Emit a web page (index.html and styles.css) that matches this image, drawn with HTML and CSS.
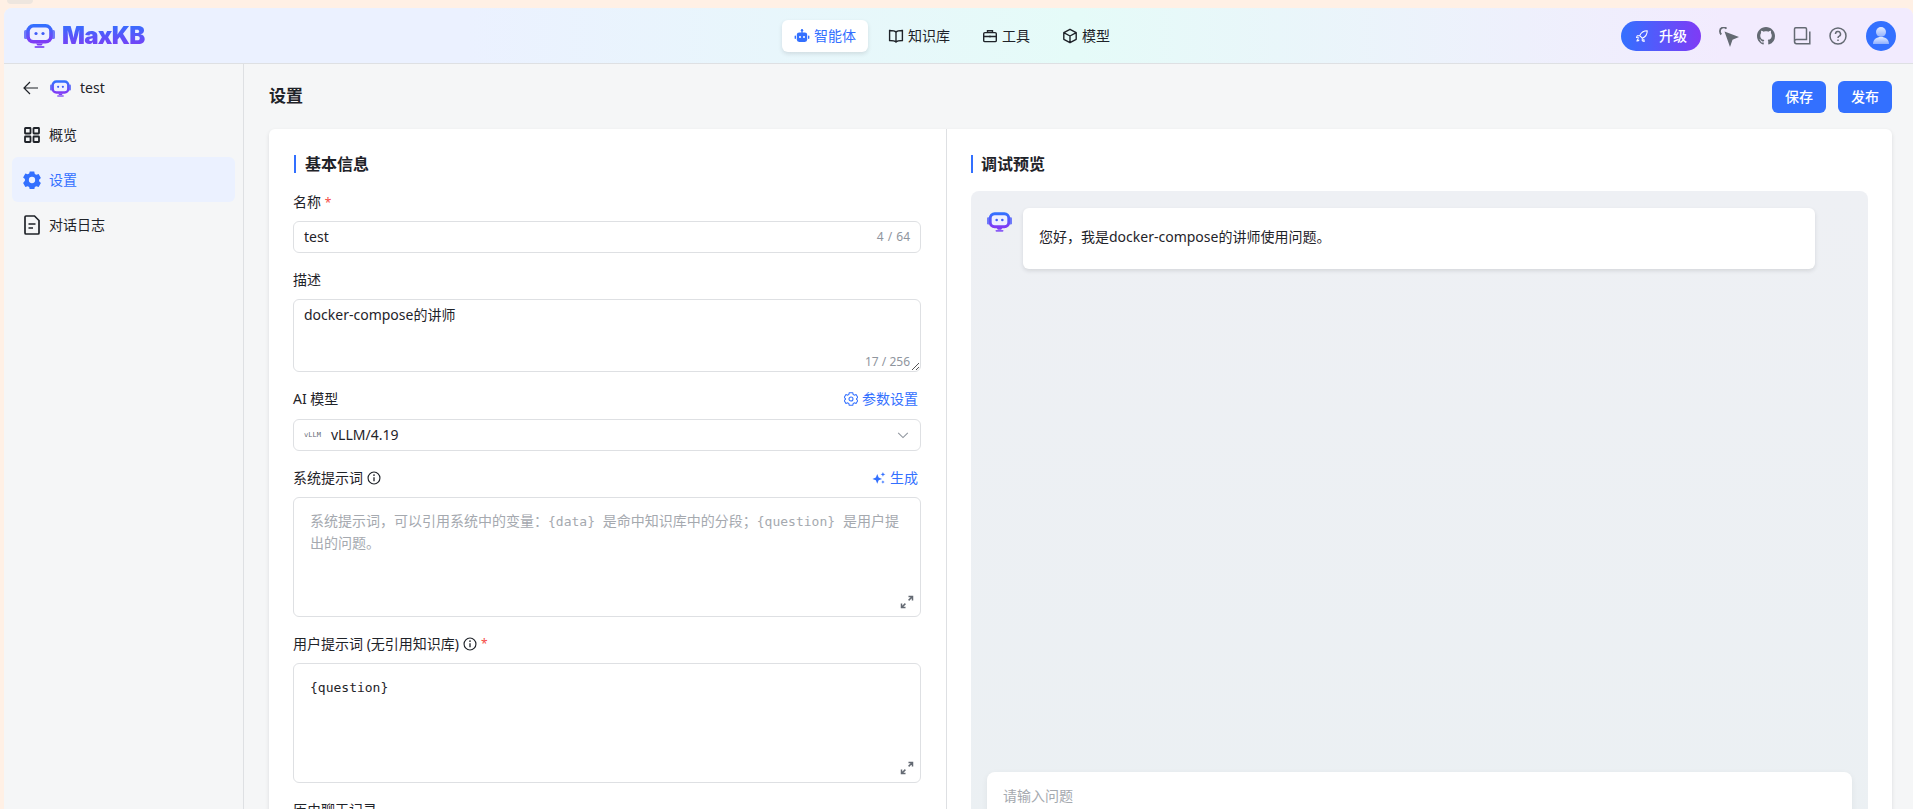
FILE: index.html
```html
<!DOCTYPE html>
<html lang="zh-CN">
<head>
    <meta charset="UTF-8">
    <meta name="viewport" content="width=device-width, initial-scale=1.0">
    <title>MaxKB</title>
    <link rel="stylesheet" href="styles.css">
</head>
<body>
    <svg class="defs" width="0" height="0">
        <defs>
            <linearGradient id="logo-grad" x1="0" y1="0" x2="0" y2="1">
                <stop offset="0" stop-color="#3370ff"/>
                <stop offset="1" stop-color="#7f3bf5"/>
            </linearGradient>
            <linearGradient id="avatar-grad" x1="0" y1="0" x2="0" y2="1">
                <stop offset="0" stop-color="#e3ebff"/>
                <stop offset="1" stop-color="#8fb0ff"/>
            </linearGradient>
            <symbol id="robot" viewBox="0 0 31 24">
                <rect x="0" y="6" width="3.500" height="9" rx="1.500" fill="#6f7cf9"/>
                <rect x="27.500" y="6" width="3.500" height="9" rx="1.500" fill="#6f7cf9"/>
                <rect x="4" y="1.800" width="23" height="16" rx="5.500" fill="#eef0ff" stroke="url(#logo-grad)" stroke-width="3.600"/>
                <circle cx="12" cy="9.500" r="1.600" fill="#3f5cf8"/>
                <circle cx="19" cy="9.500" r="1.600" fill="#3f5cf8"/>
                <path d="M12 19.500h7l-1.500 2h-4z" fill="#7f3bf5"/>
                <rect x="10.500" y="22" width="10" height="2" rx="1" fill="#8a5cf6"/>
            </symbol>
            <symbol id="expand" viewBox="0 0 16 16">
                <path d="M9.500 2.500h4v4M13.200 2.800 9.600 6.400M6.500 13.500h-4v-4M2.800 13.200l3.600-3.600" fill="none" stroke="#646a73" stroke-width="1.500"/>
            </symbol>
            <symbol id="info" viewBox="0 0 16 16">
                <circle cx="8" cy="8" r="6.800" fill="none" stroke="#1f2329" stroke-width="1.300"/>
                <path d="M8 7v4.600" stroke="#1f2329" stroke-width="1.500"/>
                <circle cx="8" cy="4.700" r="1" fill="#1f2329"/>
            </symbol>
        </defs>
    </svg>
    <div class="browser-tab"></div>

    <div class="app">
        <header class="topbar">
            <a href="#" class="brand">
                <svg class="brand-icon"><use href="#robot"/></svg>
                <span class="brand-name">MaxKB</span>
            </a>
            <nav class="topnav">
                <a href="#" class="topnav-item active">
                    <svg class="nav-icon" viewBox="0 0 16 16"><circle cx="8" cy="2.200" r="1.200" fill="#3370ff"/><path d="M7.400 3h1.200v2H7.400z" fill="#3370ff"/><rect x="2.800" y="4.400" width="10.400" height="9.600" rx="2.400" fill="#3370ff"/><rect x=".6" y="7.400" width="1.400" height="3.600" rx=".7" fill="#3370ff"/><rect x="14" y="7.400" width="1.400" height="3.600" rx=".7" fill="#3370ff"/><circle cx="6" cy="9" r="1" fill="#fff"/><circle cx="10" cy="9" r="1" fill="#fff"/></svg>
                    智能体
                </a>
                <a href="#" class="topnav-item">
                    <svg class="nav-icon" viewBox="0 0 16 16" fill="none" stroke="#1f2329" stroke-width="1.400"><path d="M8 4.200C7 3 5.400 2.500 1.600 2.500v10c3.800 0 5.400.4 6.400 1.500 1-1.100 2.600-1.500 6.400-1.500v-10C10.600 2.500 9 3 8 4.200zM8 4.200V14"/></svg>
                    知识库
                </a>
                <a href="#" class="topnav-item">
                    <svg class="nav-icon" viewBox="0 0 16 16" fill="none" stroke="#1f2329" stroke-width="1.400"><rect x="1.700" y="4.600" width="12.600" height="9" rx="1.200"/><path d="M5.500 4.600V2.700h5v1.900M1.700 8.500h12.600M8 7.600v1.800"/></svg>
                    工具
                </a>
                <a href="#" class="topnav-item">
                    <svg class="nav-icon" viewBox="0 0 16 16" fill="none" stroke="#1f2329" stroke-width="1.400" stroke-linejoin="round"><path d="M8 1.300 14.200 4.700v6.600L8 14.700l-6.200-3.400V4.700zM1.800 4.700 8 8l6.200-3.300M8 8v6.700"/></svg>
                    模型
                </a>
            </nav>
            <div class="top-actions">
                <button class="upgrade">
                    <svg class="upgrade-icon" viewBox="0 0 16 16" fill="none" stroke="#fff" stroke-width="1.200" stroke-linejoin="round"><path d="M14 2c-4 0-7 1.800-8.600 5.600l2.900 2.900C12.200 9 14 6 14 2zM5.400 7.600H2.600L1.700 9.800l3 .6M8.300 10.500v2.800l2.300.9-.7-3M3.700 11.300c-1 .4-1.400 1.500-1.500 2.500 1-.1 2.100-.5 2.500-1.500"/></svg>
                    升级
                </button>
                <div class="icon-row">
                    <svg class="tool-icon tool-cursor" viewBox="0 0 20 20"><path d="M5.500 4.500 20 10l-6.500 2.800L11 20z" fill="#646a73"/><path d="M7.500 1.700A3.700 3.700 0 0 0 1 4.500c0 1.200.5 2.200 1.300 3" fill="none" stroke="#646a73" stroke-width="1.800"/></svg>
                    <svg class="tool-icon" viewBox="0 0 16 16"><path fill="#646a73" d="M8 0C3.580 0 0 3.580 0 8c0 3.540 2.290 6.530 5.470 7.590.4.070.55-.17.55-.38 0-.19-.01-.82-.01-1.490-2.010.37-2.530-.49-2.690-.94-.09-.23-.48-.94-.82-1.130-.28-.15-.68-.52-.01-.53.63-.01 1.080.58 1.230.82.720 1.210 1.870.87 2.330.66.070-.52.280-.87.510-1.070-1.780-.2-3.640-.89-3.640-3.950 0-.87.310-1.590.820-2.150-.08-.2-.36-1.020.08-2.120 0 0 .67-.21 2.200.82.640-.18 1.320-.27 2-.27.680 0 1.360.09 2 .27 1.530-1.040 2.200-.82 2.200-.82.440 1.100.160 1.920.080 2.120.510.560.820 1.270.820 2.150 0 3.070-1.870 3.750-3.650 3.950.290.250.540.730.540 1.480 0 1.070-.01 1.930-.01 2.200 0 .21.150.46.550.38A8.013 8.013 0 0 0 16 8c0-4.420-3.580-8-8-8z"/></svg>
                    <svg class="tool-icon" viewBox="0 0 18 18" fill="none" stroke="#646a73" stroke-width="1.500"><path d="M1.500 14.500V2c0-.7.500-1.200 1.200-1.200h9.600c.7 0 1.200.5 1.200 1.200v10.500H3.500c-1.100 0-2 .9-2 2s.9 2.200 2 2.200h13.300V4.500"/></svg>
                    <svg class="tool-icon" viewBox="0 0 18 18" fill="none" stroke="#646a73" stroke-width="1.500"><circle cx="9" cy="9" r="8"/><path d="M6.500 7a2.500 2.500 0 1 1 3.700 2.200c-.8.4-1.200.9-1.200 1.800"/><path d="M9 12.500v1.400"/></svg>
                </div>
                <div class="avatar">
                    <svg viewBox="0 0 30 30" width="30" height="30"><circle cx="15" cy="11" r="5" fill="url(#avatar-grad)"/><path d="M7 23c0-4.500 3.500-7 8-7s8 2.500 8 7z" fill="url(#avatar-grad)"/></svg>
                </div>
            </div>
        </header>

        <div class="layout">
            <aside class="sidebar">
                <div class="side-head">
                    <svg class="back" viewBox="0 0 16 16" fill="none" stroke="#1f2329" stroke-width="1.200"><path d="M15 8H1M7 2 1 8l6 6"/></svg>
                    <svg class="side-logo"><use href="#robot"/></svg>
                    <span>test</span>
                </div>
                <a href="#" class="side-item">
                    <svg class="side-icon" viewBox="0 0 16 16" fill="none" stroke="#1f2329" stroke-width="1.800"><rect x="1" y="1" width="5.500" height="5.500" rx=".5"/><rect x="9.500" y="1" width="5.500" height="5.500" rx=".5"/><rect x="1" y="9.500" width="5.500" height="5.500" rx=".5"/><rect x="9.500" y="9.500" width="5.500" height="5.500" rx=".5"/></svg>
                    概览
                </a>
                <a href="#" class="side-item active">
                    <svg class="side-icon side-icon-gear" viewBox="0 0 16 16"><path fill="#3370ff" fill-rule="evenodd" d="M6 .5h4l.5 2.200 1.300.7 2.100-.7 2 3.500-1.600 1.500v1.500l1.600 1.500-2 3.500-2.100-.7-1.300.7-.5 2.300H6l-.5-2.300-1.300-.7-2.100.7-2-3.500L1.700 8.700V7.200L.1 5.700l2-3.500 2.100.7 1.300-.7zM8 5.200a2.800 2.800 0 1 0 0 5.600 2.800 2.800 0 0 0 0-5.600z"/></svg>
                    设置
                </a>
                <a href="#" class="side-item">
                    <svg class="side-icon side-icon-tall" viewBox="0 0 16 20" fill="none" stroke="#1f2329" stroke-width="1.700"><path d="M1 2c0-.6.400-1 1-1h8.500L15 5.500V18c0 .6-.4 1-1 1H2c-.6 0-1-.4-1-1zM4.500 9h7M4.500 13h4.500"/></svg>
                    对话日志
                </a>
            </aside>

            <main class="main">
                <div class="page-head">
                    <h2 class="page-title">设置</h2>
                    <div class="page-btns">
                        <button class="btn-primary">保存</button>
                        <button class="btn-primary">发布</button>
                    </div>
                </div>

                <section class="card">
                    <div class="form-side">
                        <h4 class="block-title">基本信息</h4>

                        <div class="form-item">
                            <label class="form-label">名称 <span class="req">*</span></label>
                            <div class="field field-input">test<span class="count">4 / 64</span></div>
                        </div>

                        <div class="form-item">
                            <label class="form-label">描述</label>
                            <div class="field field-desc">docker-compose的讲师
                                <span class="count count-desc">17 / 256</span>
                                <svg class="resize" viewBox="0 0 8 8" fill="none" stroke="#555" stroke-width="1"><path d="M1 8 8 1M5 8l3-3"/></svg>
                            </div>
                        </div>

                        <div class="form-item">
                            <div class="label-row">
                                <label class="form-label">AI 模型</label>
                                <a href="#" class="link">
                                    <svg class="link-icon" viewBox="0 0 16 16" fill="none" stroke="#3370ff" stroke-width="1.200" stroke-linejoin="round"><path d="M6 .8h4l.5 2.100 1.300.7 2-.7 2 3.400-1.500 1.400v.6l1.500 1.400-2 3.400-2-.7-1.300.7-.5 2.100H6l-.5-2.100-1.300-.7-2 .7-2-3.400 1.500-1.400v-.6L.2 6.300l2-3.400 2 .7 1.300-.7z"/><circle cx="8" cy="8" r="2.300"/></svg>
                                    参数设置
                                </a>
                            </div>
                            <div class="field field-select">
                                <span class="model-tag">vLLM</span>
                                vLLM/4.19
                                <svg class="chevron" viewBox="0 0 16 16" fill="none" stroke="#8f959e" stroke-width="1.200"><path d="M2.500 5.500 8 11l5.500-5.500"/></svg>
                            </div>
                        </div>

                        <div class="form-item">
                            <div class="label-row">
                                <label class="form-label label-flex">系统提示词 <svg class="info"><use href="#info"/></svg></label>
                                <a href="#" class="link">
                                    <svg class="link-icon" viewBox="0 0 16 16" fill="#3370ff"><path d="M6 3.500 7.600 7.400 11.500 9 7.600 10.600 6 14.500 4.400 10.600.5 9l3.900-1.600zM12.500 1l.8 2 2 .8-2 .8-.8 2-.8-2-2-.8 2-.8zM12.500 10.500l.6 1.400 1.400.6-1.400.6-.6 1.400-.6-1.400-1.400-.6 1.400-.6z"/></svg>
                                    生成
                                </a>
                            </div>
                            <div class="field field-prompt placeholder">
                                <div class="prompt-line">系统提示词，可以引用系统中的变量：<span class="mono">{data} </span>是命中知识库中的分段；<span class="mono">{question} </span>是用户提</div>
                                <div class="prompt-line">出的问题。</div>
                                <svg class="expand"><use href="#expand"/></svg>
                            </div>
                        </div>

                        <div class="form-item">
                            <label class="form-label label-flex">用户提示词 (无引用知识库) <svg class="info"><use href="#info"/></svg> <span class="req">*</span></label>
                            <div class="field field-prompt"><span class="mono">{question}</span>
                                <svg class="expand"><use href="#expand"/></svg>
                            </div>
                        </div>

                        <div class="form-item">
                            <label class="form-label">历史聊天记录</label>
                        </div>
                    </div>

                    <div class="preview-side">
                        <h4 class="block-title">调试预览</h4>
                        <div class="chat">
                            <div class="chat-row">
                                <svg class="chat-logo"><use href="#robot"/></svg>
                                <div class="chat-msg">您好，我是docker-compose的讲师使用问题。</div>
                            </div>
                            <div class="chat-input">请输入问题</div>
                        </div>
                    </div>
                </section>
            </main>
        </div>
    </div>
</body>
</html>
```

FILE: styles.css
```css
* {
    box-sizing: border-box;
}

html, body {
    height: 100%;
    margin: 0;
    overflow: hidden;
}

body {
    background-color: #fff0e5;
    padding: 8px 0 0 4px;
    font-family: "Noto Sans", "Noto Sans CJK SC", sans-serif;
    font-size: 14px;
    line-height: 22px;
    color: #1f2329;
}

a {
    color: inherit;
    text-decoration: none;
}

.defs {
    position: absolute;
}

.browser-tab {
    position: absolute;
    top: 0;
    left: 7px;
    width: 26px;
    height: 4px;
    background-color: #eee6df;
    border-radius: 0 0 6px 6px;
}

.app {
    height: 100%;
    display: flex;
    flex-direction: column;
    border-radius: 8px 8px 0 0;
    overflow: hidden;
    background-color: #f5f6f7;
}

/* top bar */
.topbar {
    flex: none;
    height: 56px;
    display: flex;
    align-items: center;
    padding: 0 17px 0 20px;
    background: linear-gradient(90deg, #ebf1ff 24.34%, #e5fbf8 56.18%, #f2ebfe 90.18%);
    border-bottom: 1px solid #dee0e3;
}

.brand {
    width: 758px;
    display: flex;
    align-items: center;
    gap: 7px;
}

.brand-icon {
    width: 31px;
    height: 24px;
}

.brand-name {
    font-family: Inter, sans-serif;
    font-size: 24px;
    font-weight: 900;
    line-height: 1;
    letter-spacing: -0.7px;
    background: linear-gradient(180deg, #3370ff, #7f3bf5);
    -webkit-background-clip: text;
    background-clip: text;
    color: transparent;
}

.topnav {
    display: flex;
    gap: 8px;
}

.topnav-item {
    height: 32px;
    display: flex;
    align-items: center;
    gap: 4px;
    padding: 0 12px;
    border-radius: 6px;
}

.topnav-item.active {
    background-color: #fff;
    color: #3370ff;
    box-shadow: 0 2px 4px rgba(31, 35, 41, 0.12);
}

.nav-icon {
    width: 16px;
    height: 16px;
}

.top-actions {
    margin-left: auto;
    display: flex;
    align-items: center;
}

.upgrade {
    width: 80px;
    height: 30px;
    display: flex;
    align-items: center;
    justify-content: center;
    gap: 10px;
    border: none;
    border-radius: 15px;
    background: linear-gradient(90deg, #3370ff, #7f3bf5);
    color: #fff;
    font: inherit;
    font-weight: 500;
}

.upgrade-icon {
    width: 14px;
    height: 14px;
}

.icon-row {
    display: flex;
    align-items: center;
    gap: 18px;
    margin: 0 19px 0 20px;
}

.tool-icon {
    width: 18px;
    height: 18px;
}

.tool-cursor {
    width: 20px;
    height: 20px;
    margin: 3px 0 0 -2px;
}

.avatar {
    width: 30px;
    height: 30px;
    border-radius: 50%;
    background-color: #3370ff;
    overflow: hidden;
}

.layout {
    flex: 1;
    min-height: 0;
    display: flex;
}

/* sidebar */
.sidebar {
    flex: none;
    width: 240px;
    padding: 0 8px;
    border-right: 1px solid #dee0e3;
}

.side-head {
    height: 48px;
    padding-left: 11px;
    display: flex;
    align-items: center;
}

.back {
    width: 16px;
    height: 16px;
}

.side-logo {
    width: 21px;
    height: 17px;
    margin: 0 9px 0 11px;
}

.side-item {
    height: 45px;
    display: flex;
    align-items: center;
    gap: 9px;
    padding-left: 12px;
    border-radius: 6px;
}

.side-item.active {
    background-color: #ebf1ff;
    color: #3370ff;
}

.side-icon {
    width: 16px;
    height: 16px;
}

.side-icon-gear {
    width: 18px;
    height: 18px;
    margin: 0 -1px;
}

.side-icon-tall {
    height: 20px;
}

/* main */
.main {
    flex: 1;
    min-width: 0;
    padding: 0 21px 0 25px;
    overflow: hidden;
}

.page-head {
    height: 65px;
    display: flex;
    align-items: center;
    justify-content: space-between;
    padding-bottom: 1px;
}

.page-title {
    margin: 0;
    font-size: 17px;
    font-weight: 600;
}

.page-btns {
    display: flex;
    gap: 12px;
    padding-top: 2px;
}

.btn-primary {
    width: 54px;
    height: 32px;
    border: none;
    border-radius: 6px;
    background-color: #3370ff;
    color: #fff;
    font: inherit;
    font-weight: 500;
}

.card {
    height: 760px;
    display: flex;
    background-color: #fff;
    border-radius: 6px;
    box-shadow: 0 2px 4px rgba(31, 35, 41, 0.12);
}

.form-side {
    flex: none;
    width: 678px;
    padding: 26px 25px 0 24px;
    border-right: 1px solid #dee0e3;
}

.preview-side {
    flex: 1;
    padding: 26px 24px 0 24px;
}

.block-title {
    margin: 0;
    height: 18px;
    line-height: 18px;
    padding-left: 8px;
    font-size: 16px;
    font-weight: 600;
    border-left: 2px solid #3370ff;
}

.form-side .block-title {
    margin-left: 1px;
    padding-left: 9px;
}

.form-side .form-item:first-of-type {
    margin-top: 18px;
}

.form-item {
    margin-bottom: 16px;
}

.form-label {
    display: block;
    height: 22px;
    line-height: 22px;
}

.label-flex {
    display: flex;
    align-items: center;
    gap: 4px;
}

.label-row {
    display: flex;
    justify-content: space-between;
}

.req {
    font-size: 12px;
    color: #f54a45;
}

.info {
    width: 14px;
    height: 14px;
}

.link {
    display: flex;
    align-items: center;
    gap: 4px;
    height: 22px;
    padding-right: 3px;
    color: #3370ff;
}

.link-icon {
    width: 14px;
    height: 14px;
}

.field {
    position: relative;
    margin-top: 8px;
    background-color: #fff;
    border: 1px solid #dee0e3;
    border-radius: 6px;
}

.field-input {
    height: 32px;
    line-height: 30px;
    padding: 0 10px;
}

.field-desc {
    height: 73px;
    padding: 4px 10px;
    line-height: 22px;
}

.field-select {
    height: 32px;
    margin-top: 9px;
    display: flex;
    align-items: center;
    padding: 0 10px;
}

.model-tag {
    width: 27px;
    font-size: 7px;
    color: #646a73;
    font-family: "DejaVu Sans Mono", monospace;
}

.chevron {
    margin-left: auto;
    width: 14px;
    height: 14px;
}

.count {
    position: absolute;
    right: 10px;
    top: 7px;
    font-size: 12px;
    line-height: 16px;
    word-spacing: 1px;
    color: #8f959e;
}

.count-desc {
    top: auto;
    bottom: 1px;
    word-spacing: 0;
}

.resize {
    position: absolute;
    right: 1px;
    bottom: 1px;
    width: 8px;
    height: 8px;
}

.field-prompt {
    height: 120px;
    padding: 12px 16px;
    line-height: 21px;
}

.prompt-line {
    white-space: nowrap;
}

.placeholder {
    color: #a5a9af;
}

.mono {
    font-family: "DejaVu Sans Mono", monospace;
    font-size: 13px;
    white-space: pre;
}

.expand {
    position: absolute;
    right: 5px;
    bottom: 6px;
    width: 16px;
    height: 16px;
}

/* preview */
.chat {
    display: flex;
    flex-direction: column;
    height: 677px;
    margin-top: 18px;
    padding: 17px 16px 16px;
    background: linear-gradient(180deg, #eef0f4, #ebf0f3);
    border-radius: 8px;
}

.chat-row {
    display: flex;
    gap: 11px;
    margin-right: 37px;
}

.chat-logo {
    flex: none;
    width: 25px;
    height: 20px;
    margin-top: 4px;
}

.chat-msg {
    flex: 1;
    height: 61px;
    line-height: 58px;
    padding: 0 16px;
    background-color: #fff;
    border-radius: 6px;
    box-shadow: 0 2px 4px rgba(31, 35, 41, 0.12);
}

.chat-input {
    margin-top: auto;
    height: 80px;
    padding: 13px 16px;
    line-height: 22px;
    background-color: #fff;
    border-radius: 8px;
    color: #a5a9af;
    box-shadow: 0 2px 6px rgba(31, 35, 41, 0.06);
}
```
